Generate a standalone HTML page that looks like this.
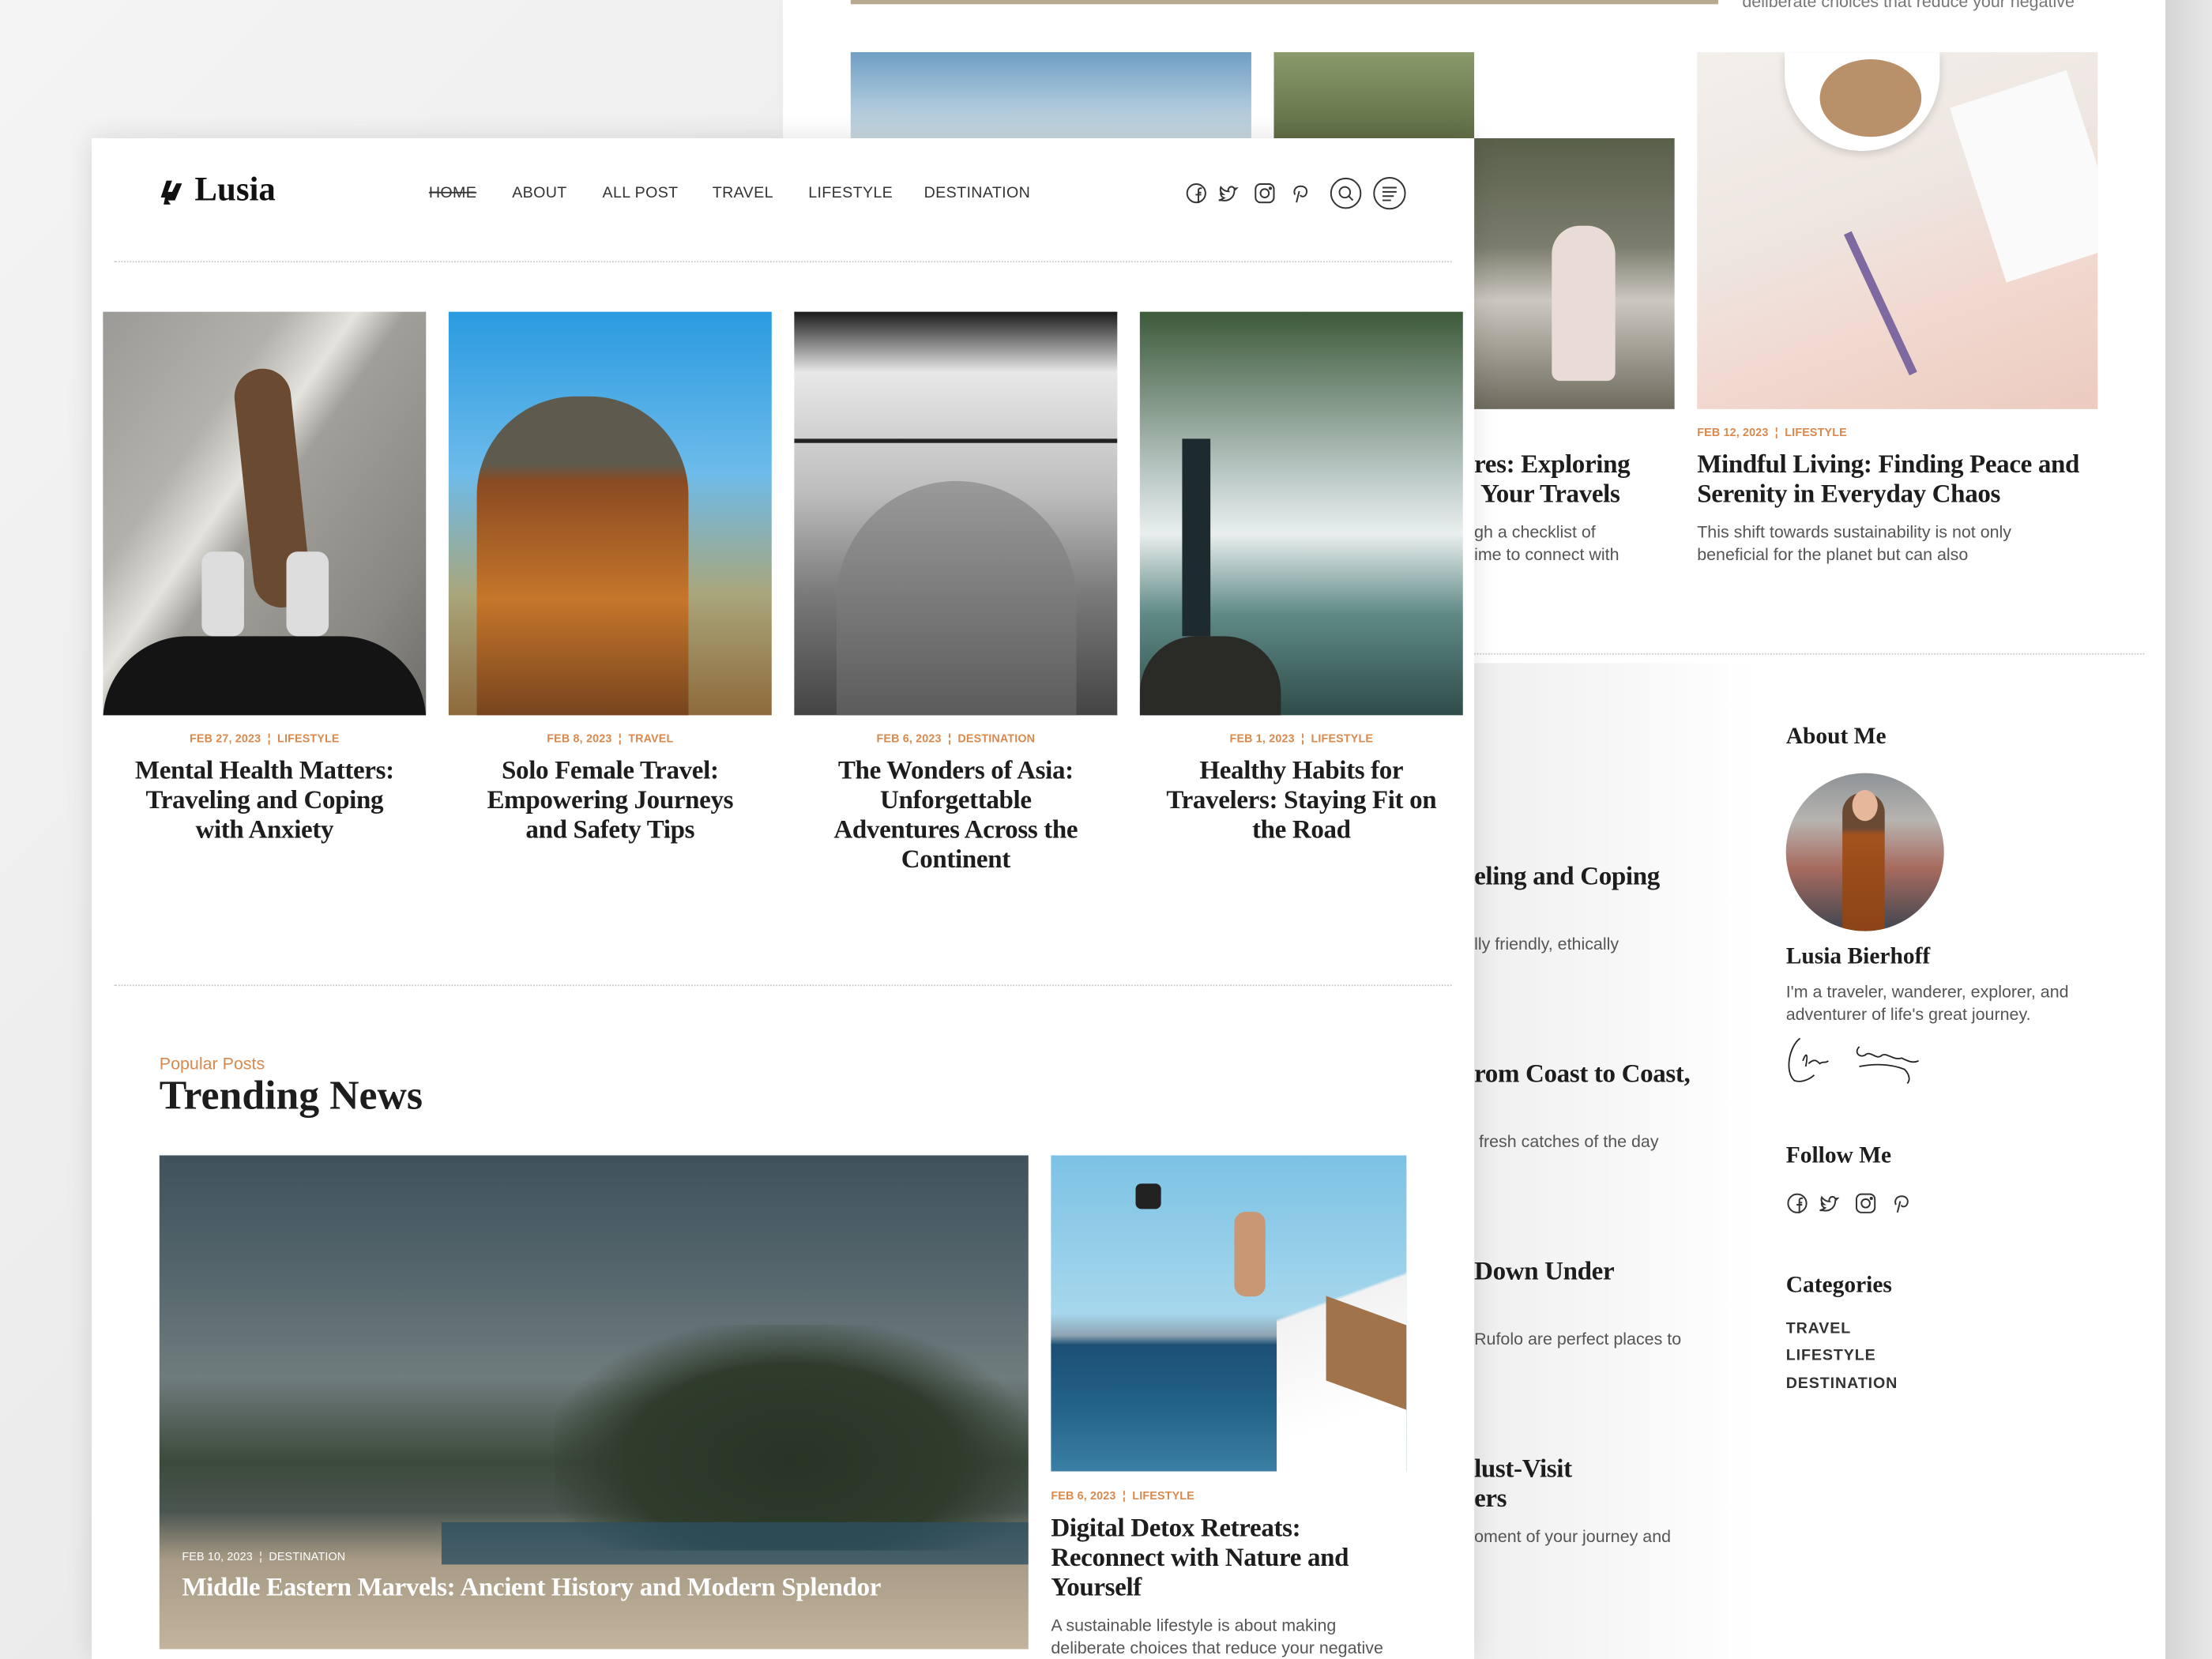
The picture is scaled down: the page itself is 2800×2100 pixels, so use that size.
<!DOCTYPE html>
<html><head><meta charset="utf-8">
<style>
*{margin:0;padding:0;box-sizing:border-box}
html,body{width:2800px;height:2100px;overflow:hidden;background:#ececec}
#s{position:absolute;left:0;top:0;width:1568px;height:1176px;transform:scale(1.785714);transform-origin:0 0;background:linear-gradient(135deg,#f4f4f4 0%,#e8e8e8 60%,#e2e2e2 100%);font-family:"Liberation Sans",sans-serif;color:#222}
.a{position:absolute}
.serif{font-family:"Liberation Serif",serif;color:#1d1d1d}
.date{font-size:8px;color:#d9894e;font-weight:bold;letter-spacing:.1px;white-space:nowrap}
.ex{font-size:12px;color:#555;line-height:15.5px;white-space:nowrap}
.t18{font-size:18.5px;line-height:21px;white-space:nowrap;font-weight:bold;letter-spacing:-.2px}
.side{font-size:16.5px;font-weight:bold}
.nav{font-size:11px;color:#333;top:131px;letter-spacing:.2px}
.dots{border-top:1.5px dotted #c8c8c8;height:0}
.cat{font-size:11px;font-weight:bold;color:#333;letter-spacing:.5px}
</style></head><body><div id="s">

<!-- back page -->
<div class="a" style="left:555px;top:0;width:980px;height:1176px;background:#fff;box-shadow:6px 0 12px rgba(0,0,0,.08)"></div>
<div class="a" style="left:1045px;top:470px;width:200px;height:706px;background:linear-gradient(90deg,#efefef,#fff)"></div>
<div class="a" style="left:603px;top:0;width:615px;height:3px;background:#b9a890"></div>
<div class="a ex" style="left:1235px;top:-6px;color:#777">deliberate choices that reduce your negative</div>
<div class="a" style="left:603px;top:37px;width:284px;height:61px;background:linear-gradient(180deg,#6f9fc4,#a9c6da 60%,#c9d8df)"></div>
<div class="a" style="left:903px;top:37px;width:142px;height:61px;background:linear-gradient(180deg,#8a9a6a,#5f6c45)"></div>
<div class="a" style="left:1045px;top:98px;width:142px;height:192px;background:linear-gradient(180deg,#59604a 0%,#7b7d6d 40%,#ccc8c0 60%,#6e6b5e 100%)"></div>
<div class="a" style="left:1100px;top:160px;width:45px;height:110px;border-radius:20px 20px 6px 6px;background:#e9dcd6"></div>
<div class="a" style="left:1203px;top:37px;width:284px;height:253px;background:linear-gradient(160deg,#f3efeb 0%,#eee7e2 40%,#f1d8cf 70%,#eccbc0 100%);overflow:hidden">
<div class="a" style="left:62px;top:0;width:110px;height:70px;border-radius:0 0 55px 55px;background:#fff;box-shadow:0 2px 6px rgba(0,0,0,.15)"></div>
<div class="a" style="left:87px;top:5px;width:72px;height:55px;border-radius:50%;background:#b8916a"></div>
<div class="a" style="left:197px;top:23px;width:87px;height:130px;background:#fafafa;transform:rotate(-18deg)"></div>
<div class="a" style="left:127px;top:123px;width:6px;height:110px;background:#7e6aa0;transform:rotate(-25deg)"></div></div>
<div class="a date" style="left:1203px;top:302px">FEB 12, 2023 &nbsp;¦&nbsp; LIFESTYLE</div>
<div class="a serif t18" style="left:1203px;top:320px">Mindful Living: Finding Peace and<br>Serenity in Everyday Chaos</div>
<div class="a ex" style="left:1203px;top:370px">This shift towards sustainability is not only<br>beneficial for the planet but can also</div>
<div class="a serif t18" style="left:1045px;top:320px">res: Exploring<br>&nbsp;Your Travels</div>
<div class="a ex" style="left:1045px;top:370px">gh a checklist of<br>ime to connect with</div>
<div class="a dots" style="left:1045px;top:463px;width:475px"></div>

<div class="a serif t18" style="left:1045px;top:612px">eling and Coping</div>
<div class="a ex" style="left:1045px;top:662px">lly friendly, ethically</div>
<div class="a serif t18" style="left:1045px;top:752px">rom Coast to Coast,</div>
<div class="a ex" style="left:1045px;top:802px">&nbsp;fresh catches of the day</div>
<div class="a serif t18" style="left:1045px;top:892px">Down Under</div>
<div class="a ex" style="left:1045px;top:942px">Rufolo are perfect places to</div>
<div class="a serif t18" style="left:1045px;top:1032px">lust-Visit<br>ers</div>
<div class="a ex" style="left:1045px;top:1082px">oment of your journey and</div>

<div class="a serif side" style="left:1266px;top:512px">About Me</div>
<div class="a" style="left:1266px;top:548px;width:112px;height:112px;border-radius:50%;background:linear-gradient(180deg,#8e9397 0%,#b7b4b0 30%,#a86b5f 60%,#3f4650 100%);overflow:hidden">
<div class="a" style="left:40px;top:14px;width:30px;height:100px;border-radius:14px 14px 0 0;background:linear-gradient(180deg,#6b4a34 0,#6b4a34 25%,#a2521d 30%,#8c4317 100%)"></div>
<div class="a" style="left:47px;top:12px;width:18px;height:22px;border-radius:50%;background:#e6b79b"></div></div>
<div class="a serif side" style="left:1266px;top:668px">Lusia Bierhoff</div>
<div class="a ex" style="left:1266px;top:695px;line-height:16px">I'm a traveler, wanderer, explorer, and<br>adventurer of life's great journey.</div>
<svg class="a" style="left:1264px;top:732px" width="100" height="40" viewBox="0 0 100 40" fill="none" stroke="#222" stroke-width="1"><path d="M12 4C4 10 1 28 8 34C14 36 20 32 22 30M14 20C16 14 18 14 16 24M18 22C22 18 24 20 26 22C28 20 30 22 32 20M54 10C50 14 54 18 58 16C62 12 66 20 70 16C74 14 78 20 84 18C88 20 92 22 96 20M54 24C64 22 76 22 86 26C90 30 90 34 88 36"/></svg>
<div class="a serif side" style="left:1266px;top:809px">Follow Me</div>
<svg class="a" style="left:1266px;top:845px" width="90" height="16" viewBox="0 0 90 16" fill="none" stroke="#333" stroke-width="1.1">
<circle cx="8" cy="8" r="6.5"/><path d="M9.5 15V7.5h2M9.5 7.5V6c0-1 .5-1.6 1.6-1.6h.9M7.5 9h4"/>
<path d="M26 13c5 1 9-2 9-7l1.5-1.5-1.6.2c-.6-1.6-3-2-4 0-.4.8-.3 1.6 0 2-2 0-4-1-5.5-3-.8 2 0 4 1.5 5-.8 0-1.3-.2-1.6-.4 0 1.4 1 2.6 2.4 3-1 .8-2.2 1.2-3.7 1.7z"/>
<rect x="50" y="1.5" width="13" height="13" rx="3.5"/><circle cx="56.5" cy="8" r="3"/><circle cx="60.5" cy="4.5" r=".6"/>
<path d="M79 14.5l2-8M78 9c-1.5-3 .5-6 4-6s5 2.5 4 5.3c-1 2.5-3.5 2.5-4.3 1"/></svg>
<div class="a serif side" style="left:1266px;top:901px">Categories</div>
<div class="a cat" style="left:1266px;top:936px">TRAVEL</div>
<div class="a cat" style="left:1266px;top:955px">LIFESTYLE</div>
<div class="a cat" style="left:1266px;top:975px">DESTINATION</div>
<div class="a" style="left:1535px;top:0;width:33px;height:1176px;background:linear-gradient(90deg,#d4d4d4,#e8e8e8)"></div>

<!-- front page -->
<div class="a" style="left:65px;top:98px;width:980px;height:1078px;background:#fff;box-shadow:0 0 18px rgba(0,0,0,.12)"></div>
<svg class="a" style="left:113px;top:127px" width="20" height="20" viewBox="0 0 20 20" fill="#111"><path d="M5 1h4L6 9h3l3-6h4l-5 12H6l2 3H3l1-5H1z"/></svg>
<div class="a serif" style="left:138px;top:122px;font-size:24px;font-weight:bold;color:#111">Lusia</div>
<div class="a nav" style="left:304px;text-decoration:line-through">HOME</div>
<div class="a nav" style="left:363px">ABOUT</div>
<div class="a nav" style="left:427px">ALL POST</div>
<div class="a nav" style="left:505px">TRAVEL</div>
<div class="a nav" style="left:573px">LIFESTYLE</div>
<div class="a nav" style="left:655px">DESTINATION</div>
<svg class="a" style="left:840px;top:129px" width="160" height="16" viewBox="0 0 160 16" fill="none" stroke="#333" stroke-width="1.1">
<circle cx="8" cy="8" r="6.5"/><path d="M9.5 15V7.5h2M9.5 7.5V6c0-1 .5-1.6 1.6-1.6h.9M7.5 9h4"/>
<path d="M26 13c5 1 9-2 9-7l1.5-1.5-1.6.2c-.6-1.6-3-2-4 0-.4.8-.3 1.6 0 2-2 0-4-1-5.5-3-.8 2 0 4 1.5 5-.8 0-1.3-.2-1.6-.4 0 1.4 1 2.6 2.4 3-1 .8-2.2 1.2-3.7 1.7z"/>
<rect x="50" y="1.5" width="13" height="13" rx="3.5"/><circle cx="56.5" cy="8" r="3"/><circle cx="60.5" cy="4.5" r=".6"/>
<path d="M79 14.5l2-8M78 9c-1.5-3 .5-6 4-6s5 2.5 4 5.3c-1 2.5-3.5 2.5-4.3 1"/></svg>
<svg class="a" style="left:942px;top:125px" width="56" height="24" viewBox="0 0 56 24" fill="none" stroke="#333" stroke-width="1.1">
<circle cx="12" cy="12" r="10.5"/><circle cx="11.3" cy="11.3" r="3.8"/><path d="M14 14l3 3"/>
<circle cx="43" cy="12" r="11"/><path d="M38 8h10M38 11h10M38 14h8M38 17h6"/></svg>
<div class="a dots" style="left:81px;top:185px;width:948px"></div>

<!-- cards -->
<div class="a" style="left:73px;top:221px;width:229px;height:286px;background:linear-gradient(125deg,#9b9a96 0%,#b3b1ab 30%,#e4e3de 42%,#a19f99 50%,#8a8883 80%,#6f6d69 100%);overflow:hidden">
<div class="a" style="left:100px;top:40px;width:40px;height:170px;border-radius:20px;background:#6b4a32;transform:rotate(-6deg)"></div>
<div class="a" style="left:0;top:230px;width:229px;height:60px;background:#141414;border-radius:60px 60px 0 0"></div>
<div class="a" style="left:70px;top:170px;width:30px;height:60px;background:#ddd;border-radius:8px"></div>
<div class="a" style="left:130px;top:170px;width:30px;height:60px;background:#ddd;border-radius:8px"></div></div>
<div class="a" style="left:318px;top:221px;width:229px;height:286px;background:linear-gradient(180deg,#2a9be0 0%,#6dbbea 40%,#a9a67b 70%,#8e6a3b 100%);overflow:hidden">
<div class="a" style="left:20px;top:60px;width:150px;height:240px;border-radius:70px 70px 0 0;background:linear-gradient(180deg,#5f5a4e 0,#5f5a4e 20%,#8a4a22 25%,#c5762a 60%,#6a3c1d 100%)"></div></div>
<div class="a" style="left:563px;top:221px;width:229px;height:286px;background:linear-gradient(180deg,#1a1a1a 0%,#e8e8e8 15%,#bdbdbd 45%,#7a7a7a 70%,#444 100%);overflow:hidden">
<div class="a" style="left:30px;top:120px;width:170px;height:170px;border-radius:85px 85px 0 0;background:linear-gradient(180deg,#9a9a9a,#5a5a5a)"></div>
<div class="a" style="left:0;top:90px;width:229px;height:3px;background:#222"></div></div>
<div class="a" style="left:808px;top:221px;width:229px;height:286px;background:linear-gradient(180deg,#3d5a3a 0%,#b9c8c5 40%,#e9efee 55%,#5f8a86 75%,#2f4d4a 100%);overflow:hidden">
<div class="a" style="left:30px;top:90px;width:20px;height:140px;background:#1d2b30"></div>
<div class="a" style="left:0;top:230px;width:100px;height:60px;border-radius:40px 40px 0 0;background:#2a2a26"></div></div>

<div class="a date" style="left:73px;top:519px;width:229px;text-align:center">FEB 27, 2023 &nbsp;¦&nbsp; LIFESTYLE</div>
<div class="a date" style="left:318px;top:519px;width:229px;text-align:center">FEB 8, 2023 &nbsp;¦&nbsp; TRAVEL</div>
<div class="a date" style="left:563px;top:519px;width:229px;text-align:center">FEB 6, 2023 &nbsp;¦&nbsp; DESTINATION</div>
<div class="a date" style="left:808px;top:519px;width:229px;text-align:center">FEB 1, 2023 &nbsp;¦&nbsp; LIFESTYLE</div>
<div class="a serif t18" style="left:63px;top:537px;width:249px;text-align:center">Mental Health Matters:<br>Traveling and Coping<br>with Anxiety</div>
<div class="a serif t18" style="left:308px;top:537px;width:249px;text-align:center">Solo Female Travel:<br>Empowering Journeys<br>and Safety Tips</div>
<div class="a serif t18" style="left:553px;top:537px;width:249px;text-align:center">The Wonders of Asia:<br>Unforgettable<br>Adventures Across the<br>Continent</div>
<div class="a serif t18" style="left:798px;top:537px;width:249px;text-align:center">Healthy Habits for<br>Travelers: Staying Fit on<br>the Road</div>
<div class="a dots" style="left:81px;top:698px;width:948px"></div>

<div class="a" style="left:113px;top:747px;font-size:12px;color:#d9894e">Popular Posts</div>
<div class="a serif" style="left:113px;top:761px;font-size:29px;font-weight:bold;color:#1d1d1d">Trending News</div>

<div class="a" style="left:113px;top:819px;width:616px;height:350px;background:linear-gradient(180deg,#3f525b 0%,#56676d 25%,#6f7c7d 45%,#3c4a3c 62%,#4a5550 72%,#a89b86 82%,#c2b49c 100%);overflow:hidden">
<div class="a" style="left:280px;top:120px;width:336px;height:160px;background:radial-gradient(ellipse at 50% 60%,#283526 0%,#2f3c2c 50%,transparent 75%)"></div>
<div class="a" style="left:200px;top:260px;width:416px;height:30px;background:#2d5060;opacity:.8"></div>
<div class="a date" style="left:16px;top:280px;color:#fff;font-weight:normal">FEB 10, 2023 &nbsp;¦&nbsp; DESTINATION</div>
<div class="a serif t18" style="left:16px;top:297px;color:#fff">Middle Eastern Marvels: Ancient History and Modern Splendor</div></div>

<div class="a" style="left:745px;top:819px;width:252px;height:224px;background:linear-gradient(180deg,#7cc2e4 0%,#a6d7ec 50%,#8da3b2 57%,#1c4f73 60%,#23638a 80%,#3b7fa5 100%);overflow:hidden">
<div class="a" style="left:160px;top:0;width:92px;height:224px;background:linear-gradient(160deg,transparent 45%,#f2f2f2 46%,#fff 80%)"></div>
<div class="a" style="left:195px;top:110px;width:57px;height:60px;background:#a0734a;transform:skewY(20deg)"></div>
<div class="a" style="left:130px;top:40px;width:22px;height:60px;background:#c99774;border-radius:8px"></div>
<div class="a" style="left:60px;top:20px;width:18px;height:18px;background:#222;border-radius:4px"></div></div>
<div class="a date" style="left:745px;top:1056px">FEB 6, 2023 &nbsp;¦&nbsp; LIFESTYLE</div>
<div class="a serif t18" style="left:745px;top:1074px">Digital Detox Retreats:<br>Reconnect with Nature and<br>Yourself</div>
<div class="a ex" style="left:745px;top:1145px">A sustainable lifestyle is about making<br>deliberate choices that reduce your negative</div>
</div></body></html>
